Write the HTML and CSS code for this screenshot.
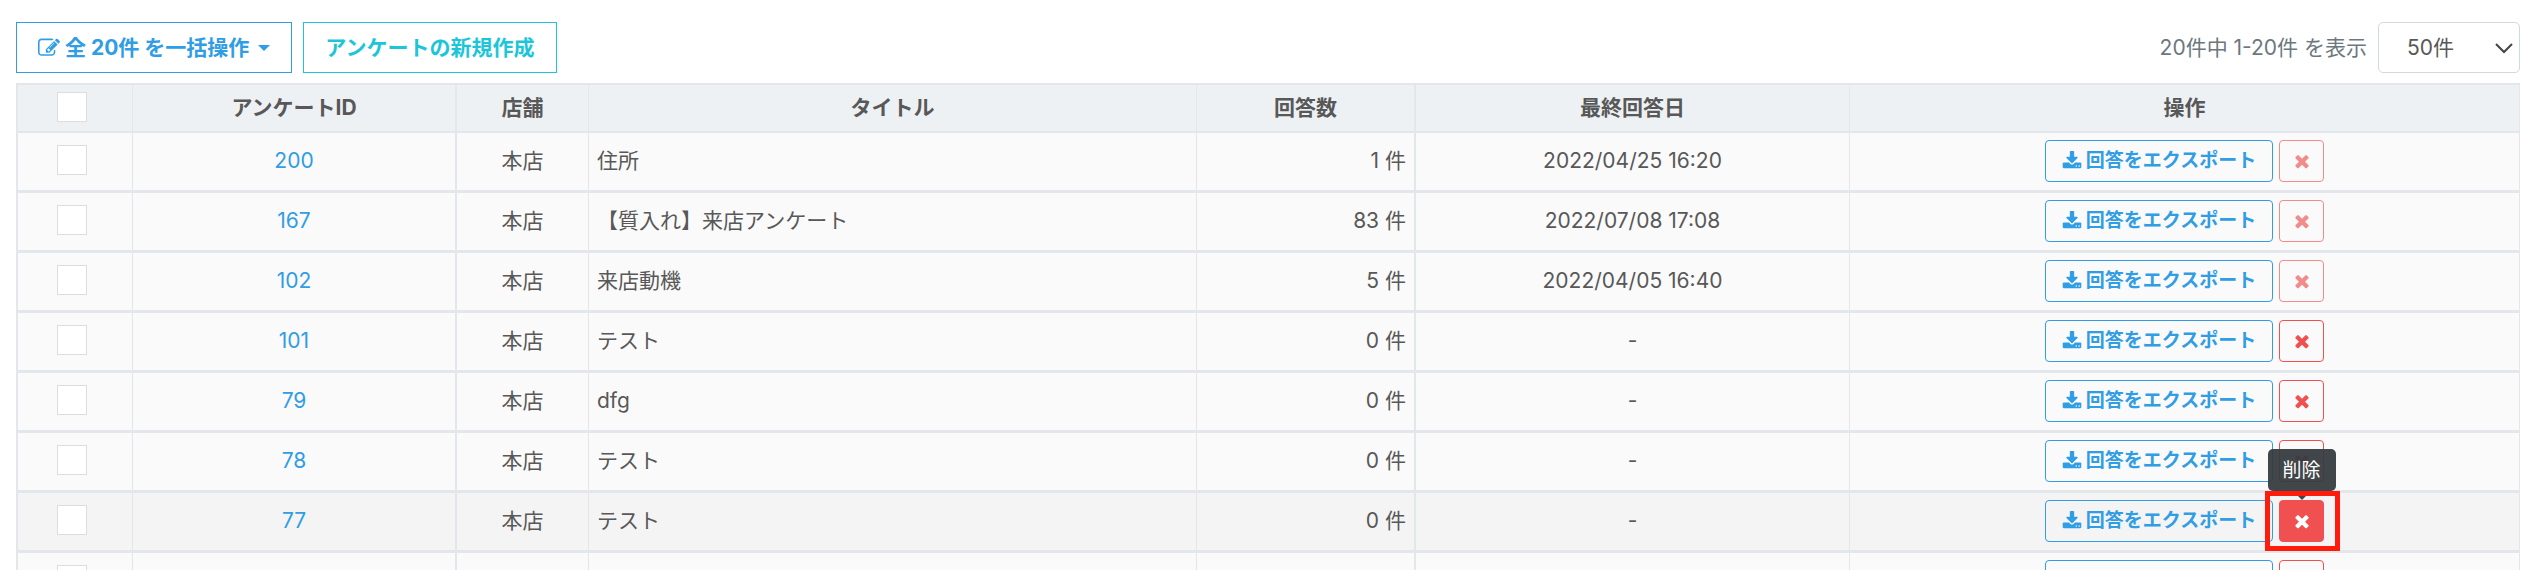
FILE: index.html
```
<!DOCTYPE html>
<html lang="ja">
<head>
    <meta charset="UTF-8">
    <meta name="viewport" content="width=device-width, initial-scale=1.0">
    <title>アンケート一覧</title>
    <link rel="stylesheet" href="styles.css">
</head>
<body>
    <!-- icon definitions -->
    <svg class="icon-defs" aria-hidden="true">
        <symbol id="icon-edit" viewBox="0 0 1792 1792"><path d="M888 1184l116-116-152-152-116 116v56h96v96h56zm440-720q-16-16-33 1l-350 350q-17 17-1 33t33-1l350-350q17-17 1-33zm80 594v190q0 119-84.500 203.500t-203.500 84.500h-832q-119 0-203.500-84.500t-84.500-203.500v-832q0-119 84.500-203.500t203.500-84.500h832q63 0 117 25 15 7 18 23 3 17-9 29l-49 49q-14 14-32 8-23-6-45-6h-832q-66 0-113 47t-47 113v832q0 66 47 113t113 47h832q66 0 113-47t47-113v-126q0-13 9-22l64-64q15-15 35-7t20 29zm-96-738l288 288-672 672h-288v-288zm444 132l-92 92-288-288 92-92q28-28 68-28t68 28l152 152q28 28 28 68t-28 68z"/></symbol>
        <symbol id="icon-download" viewBox="0 0 1792 1792"><path d="M1344 1344q0-26-19-45t-45-19-45 19-19 45 19 45 45 19 45-19 19-45zm256 0q0-26-19-45t-45-19-45 19-19 45 19 45 45 19 45-19 19-45zm128-224v320q0 40-28 68t-68 28h-1472q-40 0-68-28t-28-68v-320q0-40 28-68t68-28h465l135 136q58 56 136 56t136-56l136-136h464q40 0 68 28t28 68zm-325-569q17 41-14 70l-448 448q-18 19-45 19t-45-19l-448-448q-31-29-14-70 17-39 59-39h256v-448q0-26 19-45t45-19h256q26 0 45 19t19 45v448h256q42 0 59 39z"/></symbol>
        <symbol id="icon-times" viewBox="0 0 1792 1792"><path d="M1490 1322q0 40-28 68l-136 136q-28 28-68 28t-68-28l-294-294-294 294q-28 28-68 28t-68-28l-136-136q-28-28-28-68t28-68l294-294-294-294q-28-28-28-68t28-68l136-136q28-28 68-28t68 28l294 294 294-294q28-28 68-28t68 28l136 136q28 28 28 68t-28 68l-294 294 294 294q28 28 28 68z"/></symbol>
    </svg>

    <div class="page">
        <div class="toolbar">
            <button type="button" class="btn btn-primary">
                <svg class="icon icon-edit"><use href="#icon-edit"/></svg>
                <span>全 20件 を一括操作</span>
                <span class="caret"></span>
            </button>
            <button type="button" class="btn btn-info">アンケートの新規作成</button>
            <div class="pager">
                <label for="per-page">20件中 1-20件 を表示</label>
                <div class="select-wrap">
                    <select id="per-page">
                        <option>50件</option>
                    </select>
                    <svg class="chevron" viewBox="0 0 18 12"><path d="M1 2l8 8 8-8"/></svg>
                </div>
            </div>
        </div>

        <table class="list">
            <colgroup>
                <col class="col-check">
                <col class="col-id">
                <col class="col-shop">
                <col class="col-title">
                <col class="col-count">
                <col class="col-date">
                <col class="col-action">
            </colgroup>
            <thead>
                <tr>
                    <th class="check"><input type="checkbox" aria-label="すべて選択"></th>
                    <th class="wide">アンケートID</th>
                    <th>店舗</th>
                    <th>タイトル</th>
                    <th class="wide">回答数</th>
                    <th>最終回答日</th>
                    <th>操作</th>
                </tr>
            </thead>
            <tbody>
                <tr>
                    <td class="check"><input type="checkbox" aria-label="200を選択"></td>
                    <td class="wide"><a href="#">200</a></td>
                    <td>本店</td>
                    <td class="title">住所</td>
                    <td class="count wide">1 件</td>
                    <td>2022/04/25 16:20</td>
                    <td>
                        <div class="actions">
                            <button type="button" class="btn-sm btn-export"><svg class="icon"><use href="#icon-download"/></svg>回答をエクスポート</button>
                            <button type="button" class="btn-sm btn-delete" aria-label="削除" disabled><svg class="icon"><use href="#icon-times"/></svg></button>
                        </div>
                    </td>
                </tr>
                <tr>
                    <td class="check"><input type="checkbox" aria-label="167を選択"></td>
                    <td class="wide"><a href="#">167</a></td>
                    <td>本店</td>
                    <td class="title">【質入れ】来店アンケート</td>
                    <td class="count wide">83 件</td>
                    <td>2022/07/08 17:08</td>
                    <td>
                        <div class="actions">
                            <button type="button" class="btn-sm btn-export"><svg class="icon"><use href="#icon-download"/></svg>回答をエクスポート</button>
                            <button type="button" class="btn-sm btn-delete" aria-label="削除" disabled><svg class="icon"><use href="#icon-times"/></svg></button>
                        </div>
                    </td>
                </tr>
                <tr>
                    <td class="check"><input type="checkbox" aria-label="102を選択"></td>
                    <td class="wide"><a href="#">102</a></td>
                    <td>本店</td>
                    <td class="title">来店動機</td>
                    <td class="count wide">5 件</td>
                    <td>2022/04/05 16:40</td>
                    <td>
                        <div class="actions">
                            <button type="button" class="btn-sm btn-export"><svg class="icon"><use href="#icon-download"/></svg>回答をエクスポート</button>
                            <button type="button" class="btn-sm btn-delete" aria-label="削除" disabled><svg class="icon"><use href="#icon-times"/></svg></button>
                        </div>
                    </td>
                </tr>
                <tr>
                    <td class="check"><input type="checkbox" aria-label="101を選択"></td>
                    <td class="wide"><a href="#">101</a></td>
                    <td>本店</td>
                    <td class="title">テスト</td>
                    <td class="count wide">0 件</td>
                    <td>-</td>
                    <td>
                        <div class="actions">
                            <button type="button" class="btn-sm btn-export"><svg class="icon"><use href="#icon-download"/></svg>回答をエクスポート</button>
                            <button type="button" class="btn-sm btn-delete" aria-label="削除"><svg class="icon"><use href="#icon-times"/></svg></button>
                        </div>
                    </td>
                </tr>
                <tr>
                    <td class="check"><input type="checkbox" aria-label="79を選択"></td>
                    <td class="wide"><a href="#">79</a></td>
                    <td>本店</td>
                    <td class="title">dfg</td>
                    <td class="count wide">0 件</td>
                    <td>-</td>
                    <td>
                        <div class="actions">
                            <button type="button" class="btn-sm btn-export"><svg class="icon"><use href="#icon-download"/></svg>回答をエクスポート</button>
                            <button type="button" class="btn-sm btn-delete" aria-label="削除"><svg class="icon"><use href="#icon-times"/></svg></button>
                        </div>
                    </td>
                </tr>
                <tr>
                    <td class="check"><input type="checkbox" aria-label="78を選択"></td>
                    <td class="wide"><a href="#">78</a></td>
                    <td>本店</td>
                    <td class="title">テスト</td>
                    <td class="count wide">0 件</td>
                    <td>-</td>
                    <td>
                        <div class="actions">
                            <button type="button" class="btn-sm btn-export"><svg class="icon"><use href="#icon-download"/></svg>回答をエクスポート</button>
                            <button type="button" class="btn-sm btn-delete" aria-label="削除"><svg class="icon"><use href="#icon-times"/></svg></button>
                        </div>
                    </td>
                </tr>
                <tr class="active">
                    <td class="check"><input type="checkbox" aria-label="77を選択"></td>
                    <td class="wide"><a href="#">77</a></td>
                    <td>本店</td>
                    <td class="title">テスト</td>
                    <td class="count wide">0 件</td>
                    <td>-</td>
                    <td>
                        <div class="actions">
                            <button type="button" class="btn-sm btn-export"><svg class="icon"><use href="#icon-download"/></svg>回答をエクスポート</button>
                            <div class="tooltip-wrap">
                                <button type="button" class="btn-sm btn-delete" aria-describedby="delete-tip" aria-label="削除"><svg class="icon"><use href="#icon-times"/></svg></button>
                                <div class="tooltip" id="delete-tip" role="tooltip">削除</div>
                                <div class="highlight"></div>
                            </div>
                        </div>
                    </td>
                </tr>
                <tr>
                    <td class="check"><input type="checkbox" aria-label="選択"></td>
                    <td class="wide"></td>
                    <td></td>
                    <td class="title"></td>
                    <td class="count wide"></td>
                    <td></td>
                    <td>
                        <div class="actions">
                            <button type="button" class="btn-sm btn-export" aria-label="回答をエクスポート"></button>
                            <button type="button" class="btn-sm btn-delete" aria-label="削除"><svg class="icon"><use href="#icon-times"/></svg></button>
                        </div>
                    </td>
                </tr>
            </tbody>
        </table>
    </div>
</body>
</html>
```
FILE: styles.css
```
* {
    box-sizing: border-box;
}
body {
    font-family: Inter, 'Noto Sans CJK JP', sans-serif;
    font-size: 21px;
    line-height: 30px;
    color: #585858;
    margin: 0;
    background: #fff;
}
button, select {
    font-family: inherit;
    cursor: pointer;
}
.icon-defs {
    display: none;
}
.page {
    height: 100vh;
    overflow: hidden;
    padding: 22px 14px 0 16px;
}

/* toolbar */
.toolbar {
    display: flex;
    align-items: center;
    gap: 11px;
    margin-bottom: 10px;
}
.btn {
    display: flex;
    align-items: center;
    gap: 5px;
    height: 51px;
    padding: 0 21px;
    background: #fff;
    border: 1px solid;
    font-size: 21px;
    font-weight: 700;
    line-height: 30px;
}
.btn-primary {
    color: #309de4;
}
.btn-info {
    color: #1cc6d8;
}
.icon {
    width: 20px;
    height: 20px;
    fill: currentColor;
    flex: none;
}
.icon-edit {
    width: 22px;
    height: 22px;
}
.caret {
    margin-left: 4px;
    border-top: 6px solid;
    border-left: 6px solid transparent;
    border-right: 6px solid transparent;
}
.pager {
    display: flex;
    align-items: center;
    gap: 11px;
    margin-left: auto;
    color: #6c7780;
}
.select-wrap {
    position: relative;
}
select {
    appearance: none;
    display: block;
    width: 142px;
    height: 51px;
    padding: 0 28px;
    border: 1px solid #d1d8de;
    border-radius: 5px;
    background: #fff;
    color: #585858;
    font-size: 21px;
}
.chevron {
    position: absolute;
    right: 7px;
    top: 20px;
    width: 18px;
    height: 12px;
    fill: none;
    stroke: #444;
    stroke-width: 2;
    pointer-events: none;
}

/* table */
.list {
    width: 100%;
    table-layout: fixed;
    border-collapse: separate;
    border-spacing: 0;
    border-top: 2px solid #e3e7eb;
    border-left: 2px solid #e3e7eb;
}
.col-check {
    width: 115px;
}
.col-id {
    width: 324px;
}
.col-shop {
    width: 132px;
}
.col-count {
    width: 219px;
}
.col-date {
    width: 434px;
}
.col-action {
    width: 670px;
}
th, td {
    padding: 7px 8px 8px;
    border-right: 1px solid #e3e7eb;
    text-align: center;
    vertical-align: middle;
}
th {
    height: 48px;
    background: #edf1f4;
    border-bottom: 2px solid #e3e7eb;
    font-weight: 700;
}
td {
    height: 60px;
    background: #fafafa;
    border-bottom: 3px solid #e3e7eb;
}
.wide {
    border-right-width: 2px;
}
.active td {
    background: #f4f4f4;
}
.check {
    padding: 5px 11px 8px 5px;
}
.title {
    text-align: left;
}
.count {
    text-align: right;
}
td a {
    color: #309de4;
    text-decoration: none;
}
input[type="checkbox"] {
    appearance: none;
    display: block;
    width: 30px;
    height: 30px;
    margin: 0 auto;
    border: 1px solid #ddd;
    background: #fff;
}

/* row actions */
.actions {
    display: flex;
    justify-content: center;
    gap: 6px;
}
.btn-sm {
    display: flex;
    align-items: center;
    justify-content: center;
    gap: 4px;
    height: 42px;
    background: transparent;
    border: 1px solid;
    border-radius: 4px;
    font-size: 19px;
    font-weight: 700;
    line-height: 28px;
}
.btn-export {
    min-width: 228px;
    padding: 0 14px;
    color: #309de4;
}
.btn-delete {
    width: 45px;
    padding: 0;
    color: #f05050;
}
.btn-delete:disabled {
    opacity: 0.65;
}
.active .btn-delete {
    background: #f05050;
    border-color: #f05050;
    color: #fff;
}

/* tooltip over the delete button */
.tooltip-wrap {
    position: relative;
}
.tooltip {
    position: absolute;
    bottom: 51px;
    left: 50%;
    transform: translateX(-50%);
    height: 42px;
    padding: 7px 15px;
    border-radius: 5px;
    background: rgba(52, 58, 62, 0.94);
    color: #fff;
    font-size: 19px;
    white-space: nowrap;
}
.tooltip::after {
    content: "";
    position: absolute;
    top: 100%;
    left: 50%;
    margin-left: -9px;
    border-top: 9px solid rgba(52, 58, 62, 0.94);
    border-left: 9px solid transparent;
    border-right: 9px solid transparent;
}
.highlight {
    position: absolute;
    top: -9px;
    left: -14px;
    width: 75px;
    height: 60px;
    border: 5px solid #ff1c0c;
    pointer-events: none;
}
```
